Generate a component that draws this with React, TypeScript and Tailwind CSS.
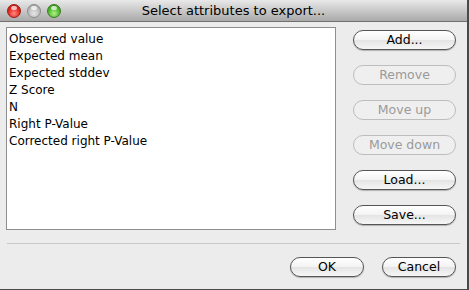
import React from 'react';

const attributes = [
  'Observed value',
  'Expected mean',
  'Expected stddev',
  'Z Score',
  'N',
  'Right P-Value',
  'Corrected right P-Value',
];

function TrafficLight({ color }: { color: 'red' | 'gray' | 'green' }) {
  const fill =
    color === 'red'
      ? 'bg-[radial-gradient(circle_at_50%_70%,#ff8a80_0%,#e5261e_55%,#a8150f_100%)] border-[#9c1a14]'
      : color === 'green'
        ? 'bg-[radial-gradient(circle_at_50%_70%,#b6f08c_0%,#4cb82a_55%,#2d7d16_100%)] border-[#3a7a22]'
        : 'bg-[radial-gradient(circle_at_50%_70%,#e6e6e6_0%,#bdbdbd_55%,#8f8f8f_100%)] border-[#8a8a8a]';
  return (
    <div className={`relative w-[14px] h-[14px] rounded-full border ${fill}`}>
      <div className="absolute left-[3px] top-[1px] w-[6px] h-[4px] rounded-full bg-white/70" />
    </div>
  );
}

function MacButton({ label, disabled, wide }: { label: string; disabled?: boolean; wide?: boolean }) {
  return (
    <button
      className={`h-[20px] ${wide ? 'w-[103px]' : 'w-[74px]'} rounded-full border text-[12.5px] leading-none flex items-center justify-center ${
        disabled
          ? 'border-[#bdbdbd] bg-[#efefef] text-[#9a9a9a]'
          : 'border-[#555] bg-[linear-gradient(#ffffff,#f3f3f3_50%,#e4e4e4_51%,#f6f6f6)] text-black shadow-[0_1px_1px_rgba(0,0,0,0.25)]'
      }`}
    >
      {label}
    </button>
  );
}

export default function App() {
  return (
    <div className="w-[469px] h-[290px] bg-[#4a4a4a] font-['DejaVu_Sans',sans-serif]">
      <div className="w-[467px] h-[289px] bg-[#ececec] flex flex-col">
        {/* title bar */}
        <div className="relative h-[22px] flex items-center justify-center bg-[linear-gradient(#e9e9e9,#a9a9a9)] border-b border-[#707070]">
          <div className="absolute left-[7px] top-[4px] flex gap-[6px]">
            <TrafficLight color="red" />
            <TrafficLight color="gray" />
            <TrafficLight color="green" />
          </div>
          <span className="text-[13px] text-black">Select attributes to export...</span>
        </div>

        <div className="flex pt-[5px] pl-[6px]">
          <div className="w-[330px] h-[203px] bg-white border border-[#8e8e8e] pt-[3px] pl-[2px]">
            {attributes.map((a) => (
              <div key={a} className="h-[17px] text-[12px] leading-[17px] text-black">
                {a}
              </div>
            ))}
          </div>
          <div className="ml-[17px] pt-[3px] flex flex-col gap-[15px]">
            <MacButton wide label="Add..." />
            <MacButton wide label="Remove" disabled />
            <MacButton wide label="Move up" disabled />
            <MacButton wide label="Move down" disabled />
            <MacButton wide label="Load..." />
            <MacButton wide label="Save..." />
          </div>
        </div>

        <div className="mt-[13px] ml-[7px] w-[453px] h-px bg-[#c8c8c8]" />

        <div className="flex justify-end gap-[18px] pr-[11px] pt-[13px]">
          <MacButton label="OK" />
          <MacButton label="Cancel" />
        </div>
      </div>
    </div>
  );
}
